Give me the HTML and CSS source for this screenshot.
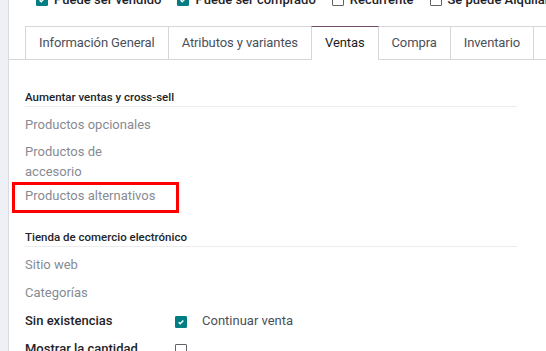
FILE: index.html
```html
<!DOCTYPE html>
<html lang="es">
<head>
  <meta charset="UTF-8" />
  <meta name="viewport" content="width=device-width, initial-scale=1.0"/>
  <title>Producto - Ventas</title>
  <link rel="stylesheet" href="styles.css">
</head>
<body>
  <div class="layout">
    <aside class="rail"></aside>

    <main class="sheet">
      <div class="flags">
        <label class="flag">
          <span class="box on"><svg viewBox="0 0 12 12"><path d="M3.2 6.2l1.9 1.9 3.7-3.9" /></svg></span>
          Puede ser vendido
        </label>
        <label class="flag">
          <span class="box on"><svg viewBox="0 0 12 12"><path d="M3.2 6.2l1.9 1.9 3.7-3.9" /></svg></span>
          Puede ser comprado
        </label>
        <label class="flag">
          <span class="box"></span>
          Recurrente
        </label>
        <label class="flag">
          <span class="box"></span>
          Se puede Alquilar
        </label>
      </div>

      <ul class="tabs">
        <li class="tab">Información General</li>
        <li class="tab">Atributos y variantes</li>
        <li class="tab active">Ventas</li>
        <li class="tab">Compra</li>
        <li class="tab">Inventario</li>
        <li class="tab">Contabilidad</li>
      </ul>

      <div class="page">
        <section class="group">
          <h3 class="group-title">Aumentar ventas y cross-sell</h3>
          <div class="row">
            <div class="lbl muted">Productos opcionales</div>
            <div class="val"></div>
          </div>
          <div class="row">
            <div class="lbl muted">Productos de accesorio</div>
            <div class="val"></div>
          </div>
          <div class="row">
            <div class="lbl muted">Productos alternativos</div>
            <div class="val"></div>
            <span class="highlight"></span>
          </div>
        </section>

        <section class="group shop">
          <h3 class="group-title">Tienda de comercio electrónico</h3>
          <div class="row">
            <div class="lbl muted">Sitio web</div>
            <div class="val"></div>
          </div>
          <div class="row">
            <div class="lbl muted">Categorías</div>
            <div class="val"></div>
          </div>
          <div class="row">
            <div class="lbl strong">Sin existencias</div>
            <div class="val">
              <span class="box on"><svg viewBox="0 0 12 12"><path d="M3.2 6.2l1.9 1.9 3.7-3.9" /></svg></span>
              <span class="val-text">Continuar venta</span>
            </div>
          </div>
          <div class="row">
            <div class="lbl strong">Mostrar la cantidad</div>
            <div class="val">
              <span class="box"></span>
            </div>
          </div>
        </section>
      </div>
    </main>
  </div>
</body>
</html>
```

FILE: styles.css
```css
html, body {
  margin: 0;
  height: 100%;
  overflow: hidden;
  background: #fff;
}
body {
  font-family: Roboto, "Liberation Sans", Arial, sans-serif;
  font-size: 13px;
  line-height: 20px;
  color: #212529;
}
.layout {
  display: flex;
  height: 100%;
}
.rail {
  flex: 0 0 8px;
  background: #eef0f5;
  border-right: 1px solid #d9dbe0;
}
.sheet {
  flex: 1;
  min-width: 0;
}

/* checkbox flags above the tabs */
.flags {
  display: flex;
  gap: 16px;
  margin-top: -10px;
  padding-left: 27px;
  white-space: nowrap;
}
.flag {
  display: flex;
  align-items: center;
  gap: 6px;
  font-weight: 500;
  color: #1f2328;
}
.box {
  flex: 0 0 12px;
  width: 12px;
  height: 12px;
  box-sizing: border-box;
  border: 1px solid #5f6368;
  border-radius: 1px;
  background: #fff;
}
.box.on {
  border-color: #017e84;
  background: #017e84;
}
.box svg {
  display: block;
  width: 10px;
  height: 10px;
  fill: none;
  stroke: #fff;
  stroke-width: 1.8;
}

/* notebook tabs */
.tabs {
  display: flex;
  flex-wrap: nowrap;
  list-style: none;
  margin: 16px 0 0;
  padding: 0 0 0 16px;
  border-bottom: 1px solid #d5d7db;
  white-space: nowrap;
}
.tab {
  flex: 0 0 auto;
  padding: 6px 13px;
  margin-left: -1px;
  border: 1px solid #d5d7db;
  border-bottom: none;
  color: #4a5059;
  letter-spacing: -0.1px;
}
.tab:first-child {
  margin-left: 0;
}
.tab.active {
  position: relative;
  z-index: 1;
  color: #1a1d21;
  background: #fff;
  border-top-color: #714b67;
  padding-bottom: 7px;
  margin-bottom: -1px;
}

/* tab content */
.page {
  padding: 8.5px 29px 0 16px;
}
.group {
  margin-top: 20.5px;
}
.group-title {
  margin: 0 0 7.5px;
  padding-bottom: 1px;
  font-size: 11.5px;
  line-height: 16px;
  font-weight: 500;
  color: #212529;
  border-bottom: 1px solid #ececec;
}
.row {
  position: relative;
  display: flex;
  align-items: flex-start;
  min-height: 23px;
  margin-bottom: 4px;
}
.shop .row {
  min-height: 24px;
}
.lbl {
  flex: 0 0 134px;
  padding-right: 16px;
}
.muted {
  color: #878b92;
}
.strong {
  font-weight: 500;
  color: #1f2328;
}
.val {
  flex: 1;
  display: flex;
  align-items: flex-start;
  gap: 15px;
}
.val .box {
  margin-top: 5px;
}
.val-text {
  color: #4a5059;
}

/* red annotation frame */
.highlight {
  position: absolute;
  left: -13px;
  top: -3.5px;
  width: 167px;
  height: 31px;
  box-sizing: border-box;
  border: 3px solid #ff0000;
  pointer-events: none;
}
```
